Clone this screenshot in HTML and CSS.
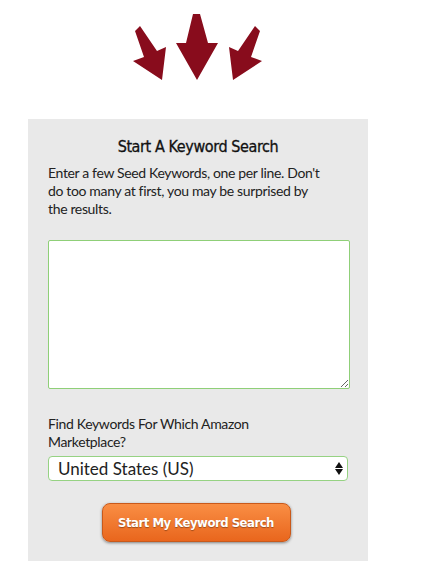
FILE: index.html
```html
<!DOCTYPE html>
<html>
<head>
<meta charset="utf-8">
<link rel="stylesheet" href="styles.css">
</head>
<body>
<div class="arrows">
  <svg width="421" height="119" viewBox="0 0 421 119">
    <g fill="#880c1c">
      <polygon points="135,31 140,26 157,51 166,47 162,80 133,61 144,57"/>
      <polygon points="193,14 200,14 208,43 218,43 197,80 176,43 186,43"/>
      <polygon points="260,31 255,26 238,51 229,47 233,80 262,61 251,57"/>
    </g>
  </svg>
</div>
<div class="box">
  <h2 class="title">Start A Keyword Search</h2>
  <p class="intro">Enter a few Seed Keywords, one per line. Don't do too many at first, you may be surprised by the results.</p>
  <textarea class="keywords"></textarea>
  <label class="label">Find Keywords For Which Amazon Marketplace?</label>
  <div class="select-wrap">
    <select class="market">
      <option>United States (US)</option>
    </select>
    <span class="caret"><span class="up"></span><span class="down"></span></span>
  </div>
  <div class="actions">
    <button class="btn">Start My Keyword Search</button>
  </div>
</div>
</body>
</html>
```

FILE: styles.css
```css
html, body {
  margin: 0;
  padding: 0;
  background: #fff;
}
body {
  font-family: Lato, "Open Sans", sans-serif;
  color: #222;
}
.arrows {
  height: 119px;
}
.arrows svg {
  display: block;
}
.box {
  margin-left: 28px;
  width: 340px;
  height: 442px;
  box-sizing: border-box;
  background: #e9e9e9;
  padding: 17px 20px 0 20px;
}
.title {
  margin: 0;
  font-family: "DejaVu Sans", sans-serif;
  font-stretch: condensed;
  font-weight: normal;
  font-size: 16px;
  line-height: 22px;
  text-align: center;
  color: #111;
  letter-spacing: -0.4px;
  -webkit-text-stroke: 0.3px #111;
}
.intro {
  margin: 6px 0 0 0;
  max-width: 272px;
  font-size: 14px;
  letter-spacing: -0.35px;
  line-height: 18px;
}
.keywords {
  display: block;
  margin: 22px 0 0 0;
  width: 302px;
  height: 149px;
  box-sizing: border-box;
  border: 1px solid #8fcf78;
  border-radius: 2px;
  background: #fff;
  padding: 4px;
}
.label {
  display: block;
  margin-top: 26px;
  max-width: 272px;
  font-size: 14px;
  letter-spacing: -0.35px;
  line-height: 18px;
}
.select-wrap {
  position: relative;
  margin-top: 5px;
  width: 300px;
}
.market {
  display: block;
  width: 300px;
  height: 25px;
  box-sizing: border-box;
  -webkit-appearance: none;
  appearance: none;
  border: 1px solid #96d283;
  border-radius: 4px;
  background: #fff;
  font-family: Lato, sans-serif;
  font-size: 17px;
  color: #222;
  padding: 0 0 0 9px;
  line-height: 23px;
}
.caret {
  position: absolute;
  right: 5px;
  top: 6px;
  display: flex;
  flex-direction: column;
  gap: 1px;
}
.up {
  width: 0; height: 0;
  border-left: 4px solid transparent;
  border-right: 4px solid transparent;
  border-bottom: 6px solid #111;
}
.down {
  width: 0; height: 0;
  border-left: 4px solid transparent;
  border-right: 4px solid transparent;
  border-top: 6px solid #111;
}
.actions {
  display: flex;
  justify-content: center;
  margin-top: 22px;
}
.btn {
  width: 189px;
  height: 39px;
  margin-left: -4px;
  border: 1px solid #c9591a;
  border-radius: 8px;
  background: linear-gradient(#f98e44, #e9661d);
  box-shadow: 0 1px 3px rgba(0,0,0,0.45);
  color: #fff;
  font-family: "DejaVu Sans", sans-serif;
  font-stretch: condensed;
  font-weight: bold;
  font-size: 13px;
  letter-spacing: -0.5px;
  text-shadow: 0 1px 1px rgba(0,0,0,0.35);
  cursor: pointer;
}
```
